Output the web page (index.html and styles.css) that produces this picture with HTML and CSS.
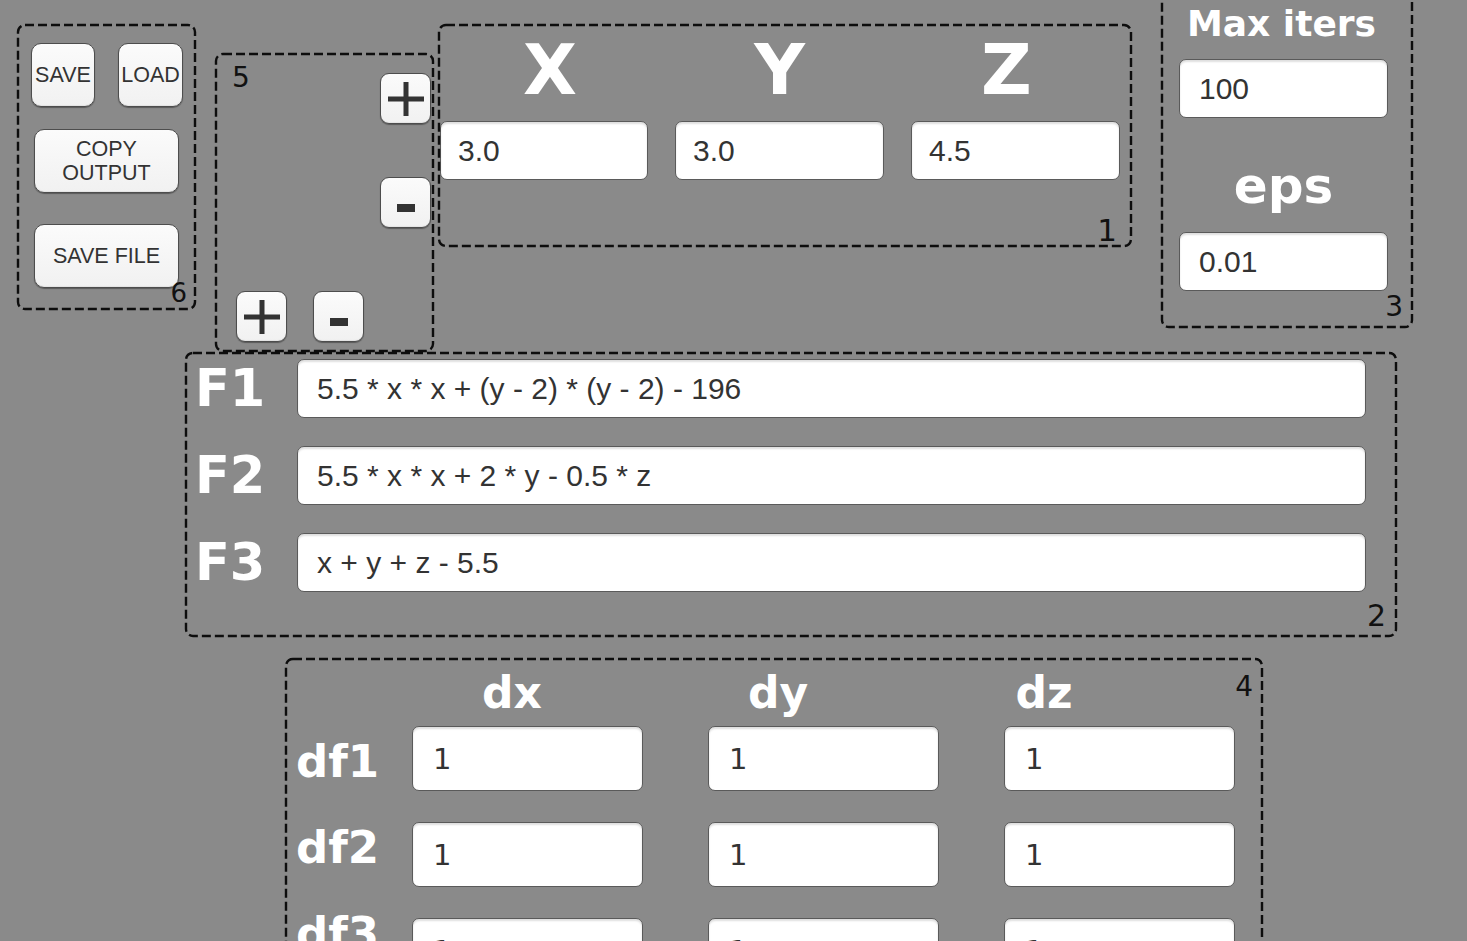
FILE: index.html
```html
<!DOCTYPE html>
<html lang="en">
<head>
<meta charset="utf-8">
<title>Newton solver</title>
<link rel="stylesheet" href="styles.css">
</head>
<body>
<div class="desk">

  <section class="panel p6">
    <svg class="frame"><rect/></svg>
    <div class="btn-row">
      <button class="btn btn-sq">SAVE</button>
      <button class="btn btn-sq btn-load">LOAD</button>
    </div>
    <button class="btn btn-wide btn-copy">COPY<br>OUTPUT</button>
    <button class="btn btn-wide btn-file">SAVE FILE</button>
    <span class="num num6">6</span>
  </section>

  <section class="panel p5">
    <svg class="frame"><rect/></svg>
    <span class="num num5">5</span>
    <div class="pm-col">
      <button class="btn btn-pm"><svg class="ico-plus" viewBox="0 0 36 34"><rect x="0" y="14.5" width="36" height="5"/><rect x="15.5" y="0" width="5" height="34"/></svg></button>
      <button class="btn btn-pm"><svg class="ico-minus" viewBox="0 0 18 8"><rect x="0" y="0" width="18" height="8"/></svg></button>
    </div>
    <div class="pm-row">
      <button class="btn btn-pm"><svg class="ico-plus" viewBox="0 0 36 34"><rect x="0" y="14.5" width="36" height="5"/><rect x="15.5" y="0" width="5" height="34"/></svg></button>
      <button class="btn btn-pm"><svg class="ico-minus" viewBox="0 0 18 8"><rect x="0" y="0" width="18" height="8"/></svg></button>
    </div>
  </section>

  <section class="panel p1">
    <svg class="frame"><rect/></svg>
    <div class="xyz">
      <div class="lbl lbl-xyz lbl-x">X</div>
      <div class="lbl lbl-xyz">Y</div>
      <div class="lbl lbl-xyz lbl-z">Z</div>
      <input class="field" type="text" value="3.0">
      <input class="field" type="text" value="3.0">
      <input class="field" type="text" value="4.5">
    </div>
    <span class="num num1">1</span>
  </section>

  <section class="panel p3">
    <svg class="frame"><rect/></svg>
    <div class="lbl lbl-iters">Max iters</div>
    <input class="field field-p3" type="text" value="100">
    <div class="lbl lbl-eps">eps</div>
    <input class="field field-p3 field-eps" type="text" value="0.01">
    <span class="num num3">3</span>
  </section>

  <section class="panel p2">
    <svg class="frame"><rect/></svg>
    <div class="funcs">
      <div class="lbl lbl-f">F1</div>
      <input class="field field-f" type="text" value="5.5 * x * x + (y - 2) * (y - 2) - 196">
      <div class="lbl lbl-f">F2</div>
      <input class="field field-f" type="text" value="5.5 * x * x + 2 * y - 0.5 * z">
      <div class="lbl lbl-f">F3</div>
      <input class="field field-f" type="text" value="x + y + z - 5.5">
    </div>
    <span class="num num2">2</span>
  </section>

  <section class="panel p4">
    <svg class="frame"><rect/></svg>
    <div class="dhead">
      <div class="lbl lbl-d">dx</div>
      <div class="lbl lbl-d">dy</div>
      <div class="lbl lbl-d">dz</div>
    </div>
    <div class="jac">
      <div class="df-col">
        <div class="lbl lbl-df">df1</div>
        <div class="lbl lbl-df">df2</div>
        <div class="lbl lbl-df">df3</div>
      </div>
      <div class="jac-grid">
        <input class="field field-j" type="text" value="1">
        <input class="field field-j" type="text" value="1">
        <input class="field field-j" type="text" value="1">
        <input class="field field-j" type="text" value="1">
        <input class="field field-j" type="text" value="1">
        <input class="field field-j" type="text" value="1">
        <input class="field field-j" type="text" value="1">
        <input class="field field-j" type="text" value="1">
        <input class="field field-j" type="text" value="1">
      </div>
    </div>
    <span class="num num4">4</span>
  </section>

</div>
</body>
</html>
```

FILE: styles.css
```css
html, body {
  margin: 0;
  padding: 0;
}

body {
  background: #8a8a8a;
  font-family: "Liberation Sans", Arial, sans-serif;
}

.desk {
  position: relative;
  width: 1467px;
  height: 941px;
  overflow: hidden;
  background: #8a8a8a;
}

/* panels placed on the free canvas */
.panel {
  position: absolute;
  box-sizing: border-box;
}

.frame {
  position: absolute;
  left: 0;
  top: 0;
  width: 100%;
  height: 100%;
  overflow: visible;
  pointer-events: none;
  z-index: 2;
}

.frame rect {
  x: 1px;
  y: 1px;
  width: calc(100% - 2px);
  height: calc(100% - 2px);
  rx: 7px;
  ry: 7px;
  fill: none;
  stroke: #0d0d0d;
  stroke-width: 2.4;
  stroke-dasharray: 9 4;
}

.num {
  position: absolute;
  font-family: "DejaVu Sans", sans-serif;
  font-size: 28px;
  line-height: 1;
  color: #111;
  z-index: 3;
}

.num1 { right: 15px; bottom: 1px; font-size: 31px; }
.num2 { right: 11px; bottom: 6px; font-size: 30px; }
.num3 { right: 10px; bottom: 7px; }
.num4 { right: 10px; top: 15px; }
.num5 { left: 17px; top: 11px; }
.num6 { right: 9px; bottom: 4px; font-size: 26px; }

/* buttons */
.btn {
  box-sizing: border-box;
  margin: 0;
  padding: 0;
  border: 1px solid #4d4d4d;
  border-radius: 10px;
  background: linear-gradient(#fbfbfb, #f1f1f1);
  box-shadow: 0 1px 1px rgba(0, 0, 0, 0.35), inset 0 -1px 1px rgba(0, 0, 0, 0.06);
  color: #333;
  font-family: "Liberation Sans", Arial, sans-serif;
  font-size: 21.5px;
  line-height: 24px;
  white-space: nowrap;
  display: flex;
  align-items: center;
  justify-content: center;
  overflow: visible;
}

/* panel 6 */
.p6 {
  left: 17px;
  top: 24px;
  width: 179px;
  height: 286px;
  padding: 19px 0 0 14px;
  display: flex;
  flex-direction: column;
  align-items: flex-start;
}

.btn-row {
  display: flex;
  gap: 23px;
}

.btn-sq {
  width: 64px;
  height: 64px;
}

.btn-load {
  width: 65px;
}

.btn-wide {
  width: 145px;
  height: 64px;
  margin-left: 3px;
}

.btn-copy {
  margin-top: 22px;
  text-align: center;
  white-space: normal;
}

.btn-file {
  margin-top: 31px;
}

/* panel 5 */
.p5 {
  left: 215px;
  top: 53px;
  width: 219px;
  height: 299px;
  padding: 20px 3px 0 21px;
  display: flex;
  flex-direction: column;
}

.pm-col {
  align-self: flex-end;
  display: flex;
  flex-direction: column;
  gap: 53px;
}

.pm-row {
  margin-top: 63px;
  display: flex;
  gap: 26px;
}

.btn-pm {
  width: 51px;
  height: 51px;
  border-radius: 9px;
}

.btn-pm svg rect {
  fill: #333;
}

.ico-plus {
  width: 36px;
  height: 34px;
}

.ico-minus {
  width: 18px;
  height: 8px;
  margin-top: 11px;
}

/* labels */
.lbl {
  font-family: "DejaVu Sans", sans-serif;
  font-weight: bold;
  color: #fff;
  text-align: center;
}

/* inputs */
.field {
  box-sizing: border-box;
  margin: 0;
  border: 1px solid #5a5a5a;
  border-radius: 7px;
  background: #fff;
  box-shadow: inset 0 2px 2px rgba(0, 0, 0, 0.13);
  color: #333;
  font-family: "Liberation Sans", Arial, sans-serif;
  font-size: 30px;
  padding: 0 0 0 17px;
  outline: none;
  height: 59px;
  width: 100%;
}

/* panel 1 */
.p1 {
  left: 438px;
  top: 24px;
  width: 694px;
  height: 223px;
  padding: 10px 0 0 2px;
}

.xyz {
  display: grid;
  grid-template-columns: 208px 209px 209px;
  column-gap: 27px;
  row-gap: 15px;
}

.lbl-xyz {
  font-size: 70px;
  line-height: 72px;
}

.lbl-x {
  padding-left: 12px;
}

.lbl-z {
  padding-right: 18px;
}

/* panel 3 */
.p3 {
  left: 1161px;
  top: -6px;
  width: 252px;
  height: 334px;
  padding: 12px 0 0 18px;
  display: flex;
  flex-direction: column;
  align-items: flex-start;
}

.lbl-iters {
  width: 209px;
  font-size: 36px;
  line-height: 36px;
  margin-left: -2px;
}

.field-p3 {
  width: 209px;
  margin-top: 17px;
  padding-left: 19px;
}

.lbl-eps {
  width: 209px;
  font-size: 50px;
  line-height: 50px;
  margin-top: 43px;
}

.field-eps {
  margin-top: 21px;
}

/* panel 2 */
.p2 {
  left: 185px;
  top: 352px;
  width: 1212px;
  height: 285px;
  padding: 7px 0 0 10px;
}

.funcs {
  display: grid;
  grid-template-columns: 102px 1069px;
  grid-auto-rows: 59px;
  row-gap: 28px;
}

.lbl-f {
  font-size: 51px;
  line-height: 59px;
  text-align: left;
}

.field-f {
  padding-left: 19px;
  font-size: 30px;
}

/* panel 4 */
.p4 {
  left: 285px;
  top: 658px;
  width: 978px;
  height: 330px;
  padding: 13px 0 0 11px;
}

.dhead {
  display: grid;
  grid-template-columns: repeat(3, 266px);
  padding-left: 83px;
}

.lbl-d {
  font-size: 44px;
  line-height: 44px;
}

.jac {
  margin-top: 11px;
  display: flex;
  align-items: flex-start;
}

.df-col {
  width: 116px;
  margin-top: -7px;
  display: flex;
  flex-direction: column;
}

.lbl-df {
  font-size: 45px;
  line-height: 86px;
  text-align: left;
}

.jac-grid {
  display: grid;
  grid-template-columns: repeat(3, 231px);
  grid-auto-rows: 65px;
  column-gap: 65px;
  row-gap: 31px;
}

.field-j {
  height: 65px;
  font-family: "DejaVu Sans", sans-serif;
  font-size: 29px;
  padding-left: 20px;
}
```
